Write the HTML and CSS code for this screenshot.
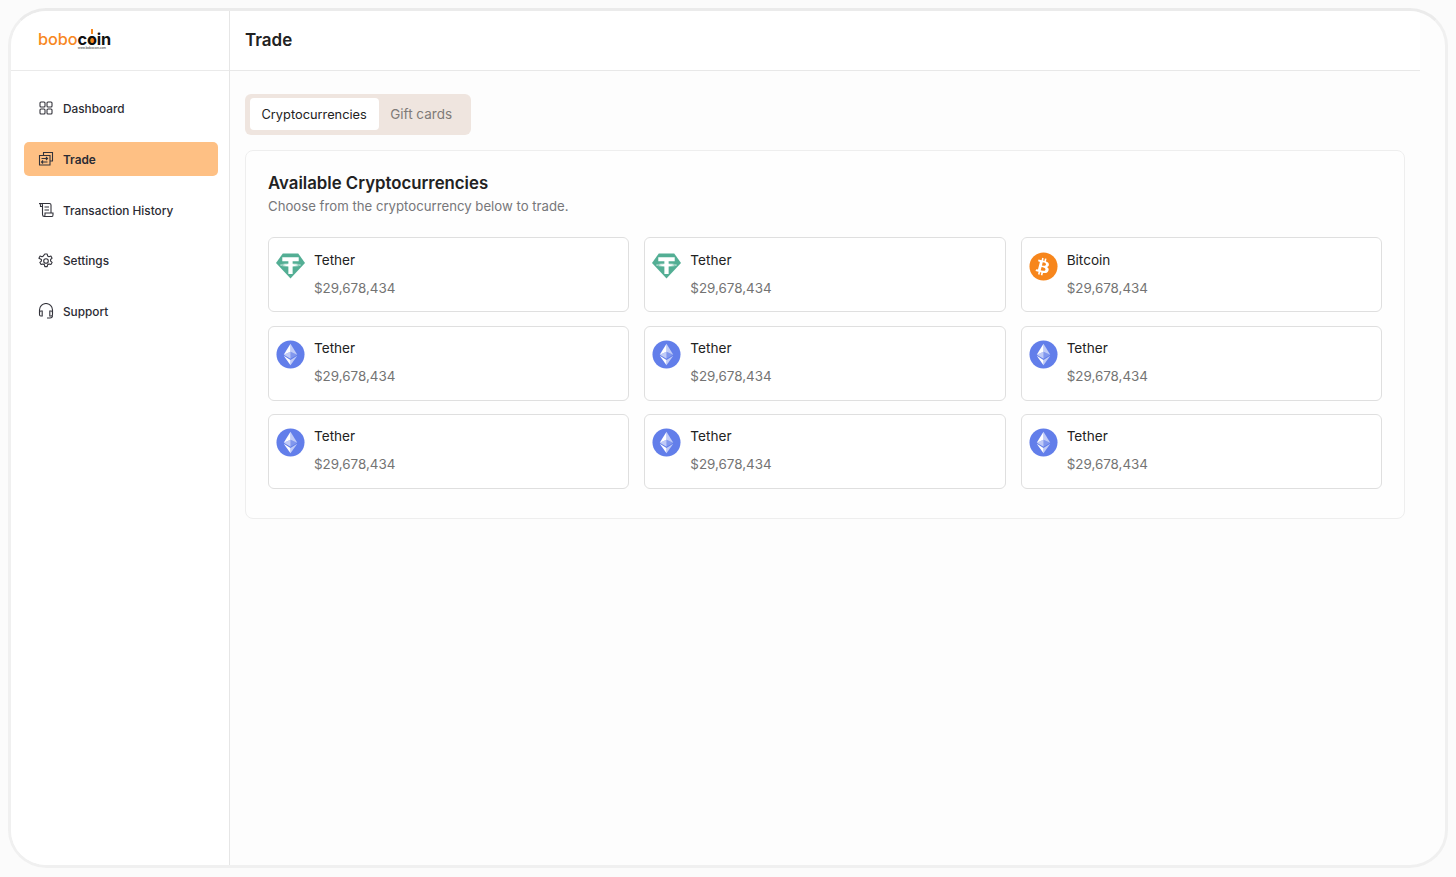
FILE: index.html
```html
<!DOCTYPE html>
<html lang="en">
<head>
<meta charset="utf-8">
<title>Trade</title>
<link rel="stylesheet" href="styles.css">
</head>
<body>
<svg class="defs" width="0" height="0" aria-hidden="true">
  <defs>
    <symbol id="tether" viewBox="0 0 30 30">
      <path d="M7 1.500h16L30 11.500 15 27.500 0 11.500z" fill="#53ae94"/>
      <path d="M6.500 5.500h17v4h-6.300v3c2.800.2 5 .5 6 1-1 .6-3.200 1-6 1.200v8h-4.400v-8c-2.800-.2-5-.6-6-1.200 1-.5 3.200-.8 6-1v-3H6.500z" fill="#fff"/>
      <path d="M4.500 13.500c2.500-1 6-1.300 10.500-1.300s8 .3 10.500 1.300c-2.500 1.100-6 1.400-10.500 1.400s-8-.3-10.500-1.400z" fill="none" stroke="#fff" stroke-width=".6" opacity=".75"/>
    </symbol>
    <symbol id="eth" viewBox="0 0 30 30">
      <circle cx="15" cy="15" r="14.500" fill="#627eea"/>
      <path d="M15 4v8.200l7 3.100z" fill="#fff" opacity=".6"/>
      <path d="M15 4 8 15.300l7-3.100z" fill="#fff"/>
      <path d="M15 20.700v5.300l7-9.700z" fill="#fff" opacity=".6"/>
      <path d="M15 20.700V26l-7-9.700z" fill="#fff"/>
      <path d="M15 19.400l7-4.100-7-3.100z" fill="#fff" opacity=".2"/>
      <path d="M8 15.300l7 4.100v-7.200z" fill="#fff" opacity=".6"/>
    </symbol>
    <symbol id="btc" viewBox="0 0 30 30">
      <circle cx="15" cy="15" r="14.500" fill="#f7861c"/>
      <path d="M20.600 13.300c.3-1.900-1.200-2.900-3.100-3.600l.6-2.600-1.600-.4-.6 2.500-1.300-.3.6-2.500-1.600-.4-.6 2.600-1-.3-2.200-.5-.4 1.700s1.200.3 1.100.3c.6.200.8.600.7.900l-1.800 7c-.1.200-.3.500-.8.400l-1.100-.3-.8 1.900 2.100.5 1.100.3-.6 2.600 1.600.4.6-2.600 1.300.3-.6 2.600 1.600.4.700-2.600c2.700.5 4.700.3 5.600-2.100.7-2-.1-3.100-1.500-3.900 1-.2 1.800-.9 2-2.300zm-3.600 5c-.5 2-3.800.9-4.900.6l.9-3.500c1.100.3 4.500.8 4 2.900zm.5-5.100c-.5 1.800-3.200.9-4.100.7l.8-3.200c.9.200 3.800.6 3.300 2.500z" fill="#fff"/>
    </symbol>
  </defs>
</svg>
<div class="frame">
  <aside class="sidebar">
    <div class="brand">
      <div class="logo">
        <div class="logo-word"><span class="logo-orange">bobo</span>c<span class="logo-coin">o</span>in</div>
        <div class="logo-url">www.bobocoin.com</div>
      </div>
    </div>
    <nav class="nav">
      <a class="nav-item">
        <svg class="nav-icon" viewBox="0 0 16 16"><rect x="2" y="2" width="5" height="5" rx="1"/><rect x="9" y="2" width="5" height="5" rx="1"/><rect x="2" y="9" width="5" height="5" rx="1"/><rect x="9" y="9" width="5" height="5" rx="1"/></svg>
        <span class="nav-label">Dashboard</span>
      </a>
      <a class="nav-item active">
        <svg class="nav-icon" viewBox="0 0 16 16"><path d="M5.500 4.500V1.500h9v8.500h-2.500"/><path d="M1.500 4.500H12V14H1.500z"/><path d="M3.500 7.500h6M8 6 9.500 7.500 8 9"/><path d="M9.500 11h-6M5 9.500 3.500 11 5 12.500"/></svg>
        <span class="nav-label">Trade</span>
      </a>
      <a class="nav-item">
        <svg class="nav-icon" viewBox="0 0 16 16"><path d="M1 1.500h10.500c1 0 1.500.6 1.500 1.500v8"/><path d="M1 1.500c1 0 1.500.8 1.500 1.500v1.500H4"/><path d="M3 1.500c1 0 1.500.8 1.500 1.500v9.500c0 1.200.8 2 1.800 2h7.700c.8 0 1-.8 1-1.800V11H7v1.700c0 1-.4 1.800-1 1.800"/><path d="M6.500 5h4.500M6.500 8h4.500"/></svg>
        <span class="nav-label">Transaction History</span>
      </a>
      <a class="nav-item">
        <svg class="nav-icon" viewBox="0 0 16 16"><circle cx="8" cy="8" r="2.300"/><path d="M6.800 1h2.400l.4 1.900 1.400.8 1.900-.6 1.200 2.100-1.500 1.300v1.600l1.500 1.300-1.200 2.100-1.900-.6-1.400.8-.4 1.900H6.800l-.4-1.900-1.400-.8-1.900.6-1.200-2.100 1.500-1.300V6.500L.9 5.200l1.200-2.100 1.900.6 1.400-.8z" stroke-linejoin="round"/></svg>
        <span class="nav-label">Settings</span>
      </a>
      <a class="nav-item">
        <svg class="nav-icon" viewBox="0 0 16 16"><path d="M1.500 10V7a6.500 6.500 0 0 1 13 0v3"/><path d="M1.500 9.500c0-1 .6-1.500 1.300-1.500h1.400v5H2.800c-.7 0-1.300-.5-1.300-1.500z"/><path d="M14.500 9.500c0-1-.6-1.500-1.300-1.500h-1.400v5h1.400c.7 0 1.300-.5 1.300-1.500z"/><path d="M14.500 12.500c0 1.500-1 2.500-2.500 2.500H9"/></svg>
        <span class="nav-label">Support</span>
      </a>
    </nav>
  </aside>
  <main class="main">
    <header class="topbar"><h1 class="page-title">Trade</h1></header>
    <div class="content">
      <div class="tabs">
        <button class="tab active">Cryptocurrencies</button>
        <button class="tab">Gift cards</button>
      </div>
      <section class="panel">
        <h2 class="panel-title">Available Cryptocurrencies</h2>
        <p class="panel-sub">Choose from the cryptocurrency below to trade.</p>
        <div class="grid">
          <div class="card"><svg class="coin"><use href="#tether"/></svg><div><div class="name">Tether</div><div class="price">$29,678,434</div></div></div>
          <div class="card"><svg class="coin"><use href="#tether"/></svg><div><div class="name">Tether</div><div class="price">$29,678,434</div></div></div>
          <div class="card"><svg class="coin"><use href="#btc"/></svg><div><div class="name">Bitcoin</div><div class="price">$29,678,434</div></div></div>
          <div class="card"><svg class="coin"><use href="#eth"/></svg><div><div class="name">Tether</div><div class="price">$29,678,434</div></div></div>
          <div class="card"><svg class="coin"><use href="#eth"/></svg><div><div class="name">Tether</div><div class="price">$29,678,434</div></div></div>
          <div class="card"><svg class="coin"><use href="#eth"/></svg><div><div class="name">Tether</div><div class="price">$29,678,434</div></div></div>
          <div class="card"><svg class="coin"><use href="#eth"/></svg><div><div class="name">Tether</div><div class="price">$29,678,434</div></div></div>
          <div class="card"><svg class="coin"><use href="#eth"/></svg><div><div class="name">Tether</div><div class="price">$29,678,434</div></div></div>
          <div class="card"><svg class="coin"><use href="#eth"/></svg><div><div class="name">Tether</div><div class="price">$29,678,434</div></div></div>
        </div>
      </section>
    </div>
  </main>
</div>
</body>
</html>
```
FILE: styles.css
```css
* { box-sizing: border-box; }
html, body { height: 100%; }
body {
  margin: 0;
  padding: 8px;
  background: #fbfbfb;
  font-family: Inter, "Liberation Sans", sans-serif;
  color: #1f1f1f;
  overflow: hidden;
}
.defs { position: absolute; }
.frame {
  width: 1440px;
  height: 860px;
  display: flex;
  background: #fdfdfd;
  border: 3px solid #f0f0f0;
  border-top-color: #ebebeb;
  border-radius: 38px;
  overflow: hidden;
}
.sidebar {
  width: 219px;
  flex: none;
  background: #fff;
  border-right: 1px solid #e6e6e6;
}
.brand {
  height: 60px;
  border-bottom: 1px solid #eaeaea;
  padding: 18px 0 0 27px;
}
.logo { width: 74px; }
.logo-word {
  font-size: 16.300px;
  line-height: 20px;
  font-weight: 700;
  letter-spacing: -.1px;
  color: #111;
  white-space: nowrap;
}
.logo-orange { color: #f7881f; font-weight: 500; }
.logo-coin {
  position: relative;
  display: inline-block;
  color: #111;
  background: radial-gradient(circle at 50% 58%, #f7881f 0 30%, transparent 32%);
}
.logo-coin::before {
  content: "";
  position: absolute;
  left: calc(50% - 1px);
  top: 0;
  width: 2px;
  height: 5px;
  background: #f7881f;
}
.logo-url {
  font-size: 3px;
  line-height: 3px;
  color: #222;
  text-align: right;
  margin-top: -2px;
  padding-right: 6px;
}
.nav {
  padding: 20.300px 11px 0 13px;
  display: flex;
  flex-direction: column;
  gap: 16.800px;
}
.nav-item {
  height: 34px;
  display: flex;
  align-items: center;
  gap: 9px;
  padding: 0 14px;
  border-radius: 5px;
  font-size: 11.800px;
  font-weight: 500;
  color: #2b2b33;
}
.nav-label { padding-top: 1.500px; }
.nav-item.active {
  background: #fec084;
  font-weight: 600;
}
.nav-icon {
  width: 16px;
  height: 16px;
  flex: none;
  fill: none;
  stroke: #33333b;
  stroke-width: 1.100;
}
.main {
  width: 1190px;
  flex: none;
}
.topbar {
  height: 60px;
  background: #fff;
  border-bottom: 1px solid #e8e8e8;
  padding: 0 15px 2px;
  display: flex;
  align-items: center;
}
.page-title {
  margin: 0;
  font-size: 17px;
  font-weight: 600;
  color: #222;
}
.content { padding: 23px 15px 0; }
.tabs {
  display: inline-flex;
  vertical-align: top;
  height: 41px;
  padding: 4px 5px 5px;
  background: #efe5df;
  border-radius: 6px;
}
.tab {
  border: 0;
  background: transparent;
  font: 400 13.500px Inter, "Liberation Sans", sans-serif;
  color: #7f7b78;
  padding: 0 13.500px 0 11.500px;
  border-radius: 4px;
}
.tab.active {
  background: #fff;
  color: #222;
  font-size: 12.800px;
  font-weight: 400;
  padding: 0 12px 0 11.500px;
}
.panel {
  margin-top: 15px;
  height: 369px;
  background: #fefefe;
  border: 1px solid #eeeeee;
  border-radius: 8px;
  padding: 22px 22px 0;
}
.panel-title {
  margin: 0;
  font-size: 16.800px;
  line-height: 20px;
  font-weight: 600;
  color: #222;
}
.panel-sub {
  margin: 4px 0 0;
  font-size: 13.200px;
  line-height: 18px;
  color: #77777a;
}
.grid {
  margin-top: 22.450px;
  display: grid;
  grid-template-columns: repeat(3, 1fr);
  grid-auto-rows: 75px;
  column-gap: 15px;
  row-gap: 13.200px;
}
.card {
  display: flex;
  gap: 9px;
  padding: 13.550px 7px 0;
  background: #fff;
  border: 1px solid #dfdfdf;
  border-radius: 6px;
}
.coin { width: 29px; height: 29px; flex: none; }
.name {
  font-size: 13.600px;
  line-height: 17px;
  font-weight: 400;
  color: #222;
}
.price {
  margin-top: 11px;
  font-size: 13.400px;
  line-height: 17px;
  color: #737373;
}
```
